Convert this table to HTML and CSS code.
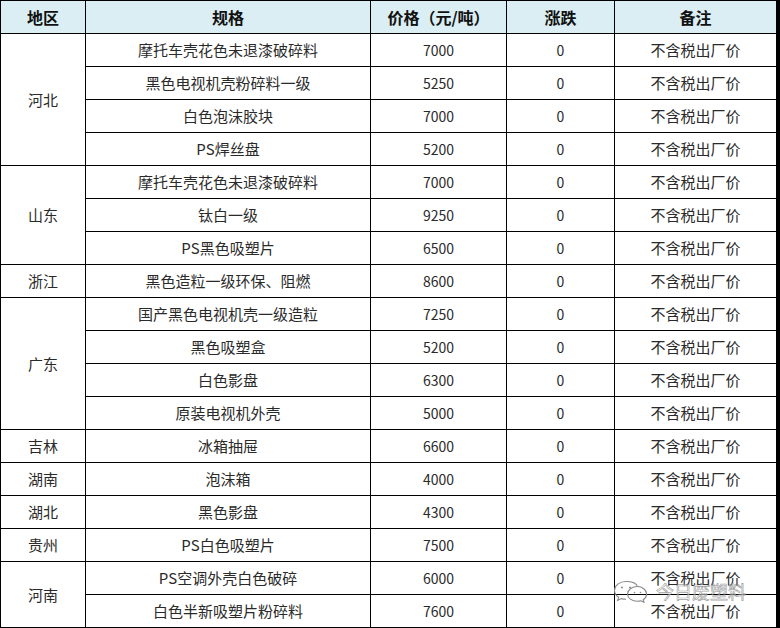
FILE: index.html
```html
<!DOCTYPE html>
<html lang="zh">
<head>
<meta charset="utf-8">
<link rel="stylesheet" href="styles.css">
</head>
<body>
<div class="page">
<table class="price">
<colgroup>
<col class="c-region"><col class="c-spec"><col class="c-price"><col class="c-chg"><col class="c-note">
</colgroup>
<thead>
<tr><th>地区</th><th>规格</th><th>价格（元/吨）</th><th>涨跌</th><th>备注</th></tr>
</thead>
<tbody>
<tr><td rowspan="4">河北</td><td>摩托车壳花色未退漆破碎料</td><td class="num">7000</td><td class="num">0</td><td>不含税出厂价</td></tr>
<tr><td>黑色电视机壳粉碎料一级</td><td class="num">5250</td><td class="num">0</td><td>不含税出厂价</td></tr>
<tr><td>白色泡沫胶块</td><td class="num">7000</td><td class="num">0</td><td>不含税出厂价</td></tr>
<tr><td>PS焊丝盘</td><td class="num">5200</td><td class="num">0</td><td>不含税出厂价</td></tr>
<tr><td rowspan="3">山东</td><td>摩托车壳花色未退漆破碎料</td><td class="num">7000</td><td class="num">0</td><td>不含税出厂价</td></tr>
<tr><td>钛白一级</td><td class="num">9250</td><td class="num">0</td><td>不含税出厂价</td></tr>
<tr><td>PS黑色吸塑片</td><td class="num">6500</td><td class="num">0</td><td>不含税出厂价</td></tr>
<tr><td>浙江</td><td>黑色造粒一级环保、阻燃</td><td class="num">8600</td><td class="num">0</td><td>不含税出厂价</td></tr>
<tr><td rowspan="4">广东</td><td>国产黑色电视机壳一级造粒</td><td class="num">7250</td><td class="num">0</td><td>不含税出厂价</td></tr>
<tr><td>黑色吸塑盒</td><td class="num">5200</td><td class="num">0</td><td>不含税出厂价</td></tr>
<tr><td>白色影盘</td><td class="num">6300</td><td class="num">0</td><td>不含税出厂价</td></tr>
<tr><td>原装电视机外壳</td><td class="num">5000</td><td class="num">0</td><td>不含税出厂价</td></tr>
<tr><td>吉林</td><td>冰箱抽屉</td><td class="num">6600</td><td class="num">0</td><td>不含税出厂价</td></tr>
<tr><td>湖南</td><td>泡沫箱</td><td class="num">4000</td><td class="num">0</td><td>不含税出厂价</td></tr>
<tr><td>湖北</td><td>黑色影盘</td><td class="num">4300</td><td class="num">0</td><td>不含税出厂价</td></tr>
<tr><td>贵州</td><td>PS白色吸塑片</td><td class="num">7500</td><td class="num">0</td><td>不含税出厂价</td></tr>
<tr><td rowspan="2">河南</td><td>PS空调外壳白色破碎</td><td class="num">6000</td><td class="num">0</td><td>不含税出厂价</td></tr>
<tr><td>白色半新吸塑片粉碎料</td><td class="num">7600</td><td class="num">0</td><td>不含税出厂价</td></tr>
</tbody>
</table>
<div class="watermark">
<svg class="wm-icon" width="40" height="24" viewBox="0 0 40 24" fill="none" stroke="#8a8a8a" stroke-width="1.1">
<path d="M14 2.5c-6.4 0-11.5 4-11.5 8.9 0 2.8 1.6 5.2 4.1 6.9l-1 3.2 3.7-1.9c1.4 .4 3 .7 4.7 .7"/>
<path d="M25.5 9.5c-5.6 0-10 3.4-10 7.4s4.4 7.4 10 7.4c1.2 0 2.4-.2 3.5-.5l3 1.5-.8-2.6c2.1-1.4 3.4-3.4 3.4-5.8 0-4-4.5-7.4-9.1-7.4z" transform="translate(0,-2)"/>
<path d="M25.6 7.6C24.6 4.5 20 2.5 14 2.5"/>
<circle cx="10" cy="8.5" r="1" fill="#8a8a8a" stroke="none"/>
<circle cx="18" cy="8.5" r="1" fill="#8a8a8a" stroke="none"/>
<circle cx="22.5" cy="13.5" r=".8" fill="#8a8a8a" stroke="none"/>
<circle cx="28.5" cy="13.5" r=".8" fill="#8a8a8a" stroke="none"/>
</svg>
<span class="wm-text">今日废塑料</span>
</div>
</div>
</body>
</html>
```
FILE: styles.css
```css
html, body {
  margin: 0;
  padding: 0;
  background: #fff;
}
.page {
  position: relative;
  width: 780px;
  height: 628px;
  overflow: hidden;
}
.price {
  border-collapse: separate;
  border-spacing: 0;
  table-layout: fixed;
  width: 780px;
  border-top: 1px solid #000;
  border-left: 1px solid #000;
  font-family: "Noto Sans CJK SC", sans-serif;
  font-size: 15px;
  color: #2a2a2a;
}
.c-region { width: 85px; }
.c-spec { width: 285px; }
.c-price { width: 136px; }
.c-chg { width: 108px; }
.c-note { width: 165px; }
.price tr { height: 33px; }
.price th,
.price td {
  box-sizing: border-box;
  height: 33px;
  padding: 0;
  border-right: 1px solid #000;
  border-bottom: 1px solid #000;
  text-align: center;
  vertical-align: middle;
  line-height: 20px;
  white-space: nowrap;
}
.price th:last-child,
.price td:last-child {
  border-right: 4px solid #000;
}
.price th {
  background: #daeef3;
  font-size: 16px;
  font-weight: 700;
  color: #111;
}
.price .num {
  font-size: 14px;
}
.watermark {
  position: absolute;
  left: 612px;
  top: 579px;
  display: flex;
  align-items: center;
  gap: 4px;
}
.wm-text {
  font-family: "Noto Sans CJK SC", sans-serif;
  font-size: 18px;
  line-height: 24px;
  color: rgba(255, 255, 255, 0.55);
  -webkit-text-stroke: 0.7px rgba(120, 120, 120, 0.7);
}
```
